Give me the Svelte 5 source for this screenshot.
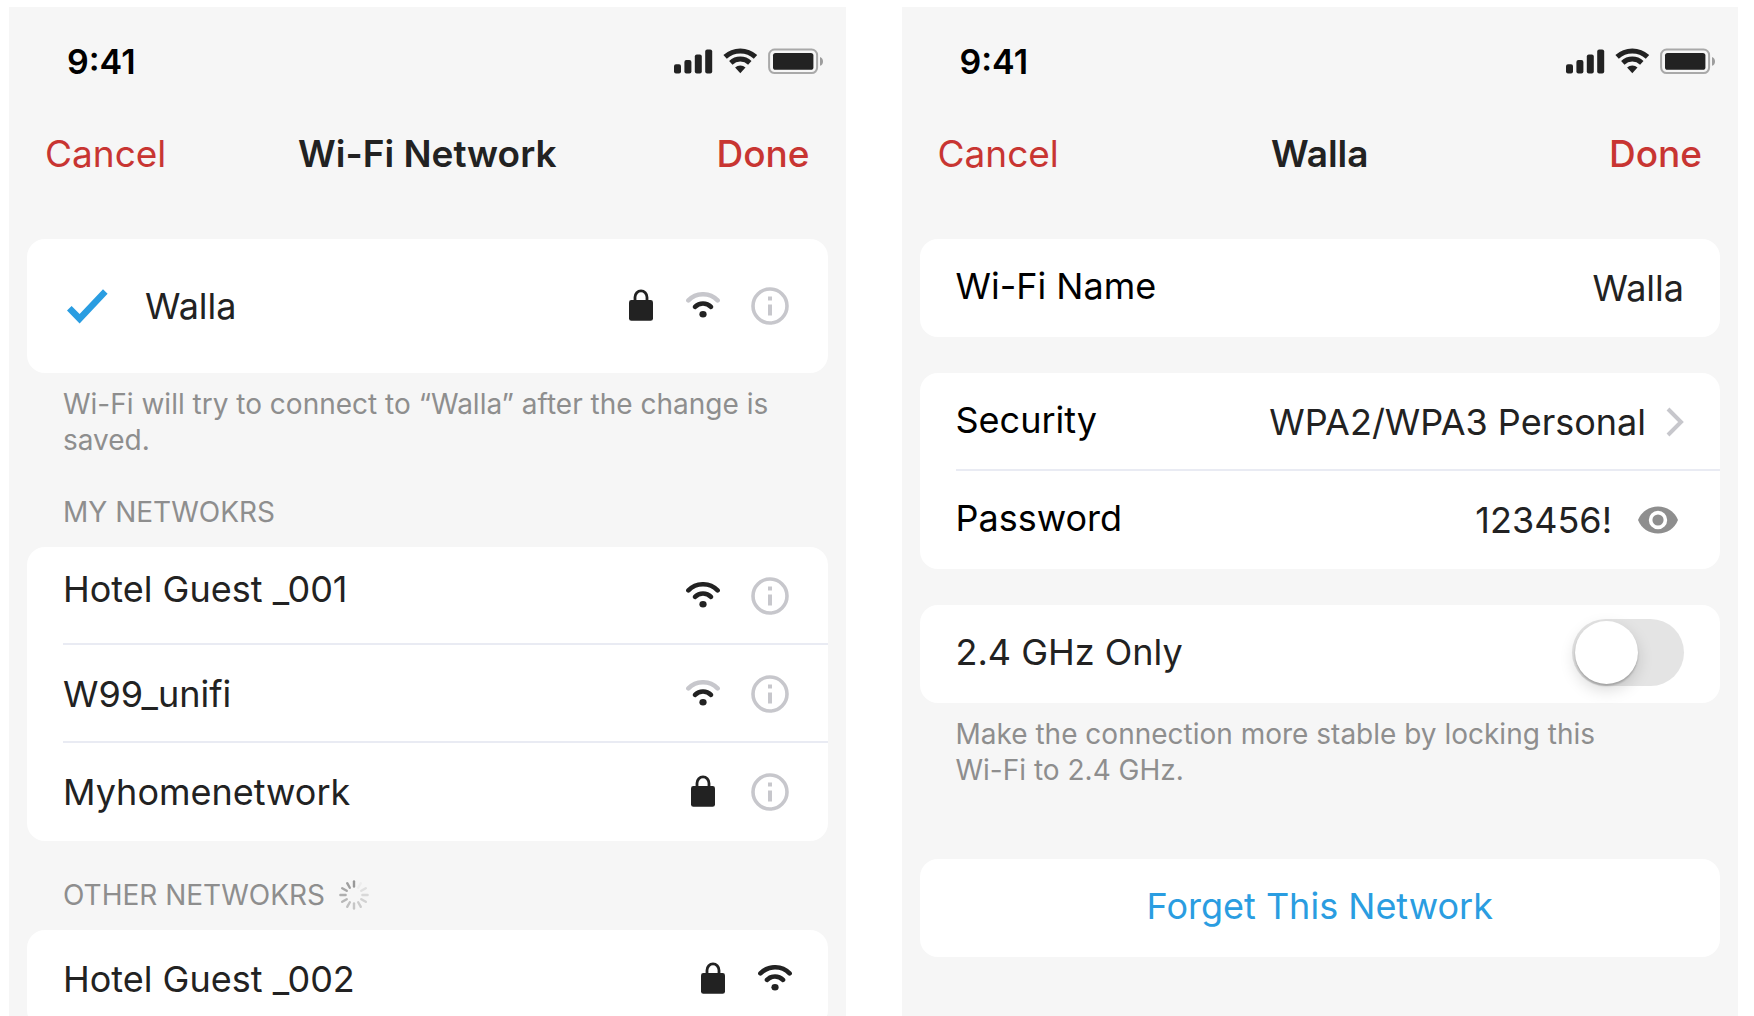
<!--
  Wi-Fi settings: the network picker on the left, the details of the joined network on the right.
-->
<script lang="ts">
  type Network = { name: string; locked?: boolean; signal?: 'full' | 'mid'; info?: boolean };

  const myNetworks: Network[] = [
    { name: 'Hotel Guest _001', signal: 'full', info: true },
    { name: 'W99_unifi', signal: 'mid', info: true },
    { name: 'Myhomenetwork', locked: true, info: true }
  ];
  const otherNetworks: Network[] = [{ name: 'Hotel Guest _002', locked: true, signal: 'full' }];
  const current: Network = { name: 'Walla', locked: true, signal: 'mid', info: true };

  // opacity of each spinner tick, clockwise from the top
  const ticks = [0.9, 0.08, 0.2, 0.28, 0.34, 0.4, 0.46, 0.52, 0.6, 0.68, 0.76, 0.84];

  let ssid = $state('Walla');
  let password = $state('123456!');
  let showPassword = $state(true);
  let only24 = $state(false);
</script>

{#snippet topBar(title: string)}
  <div class="status">
    <span class="time">9:41</span>
    <svg width="150" height="28" viewBox="0 0 150 28" aria-hidden="true">
      <g fill="#222">
        <rect x="0" y="16.2" width="7" height="9.4" rx="2" />
        <rect x="10.4" y="12" width="7" height="13.6" rx="2" />
        <rect x="20.8" y="6.4" width="7" height="19.2" rx="2" />
        <rect x="31.2" y="1.4" width="7" height="24.2" rx="2" />
      </g>
      <g fill="none" stroke="#222" stroke-width="5">
        <path d="M51.1 8.9A22.3 22.3 0 0 1 81.5 8.9" />
        <path d="M56.8 14.8A14 14 0 0 1 75.8 14.8" />
      </g>
      <path d="M66.3 25.2L61.1 19.6A7.6 7.6 0 0 1 71.5 19.6Z" fill="#222" />
      <rect x="95.1" y="1.5" width="48" height="23.6" rx="5.5" fill="none" stroke="#222" stroke-opacity="0.36" stroke-width="2" />
      <rect x="99" y="5" width="40.4" height="16.8" rx="2.6" fill="#222" />
      <path d="M146 9C148 9.8 149 11.4 149 13.4S148 17 146 17.8Z" fill="#222" fill-opacity="0.42" />
    </svg>
  </div>
  <header class="nav">
    <button type="button" class="cancel">Cancel</button>
    <h1>{title}</h1>
    <button type="button" class="done">Done</button>
  </header>
{/snippet}

{#snippet icons(net: Network)}
  <span class="icons">
    {#if net.locked}
      <svg width="34" height="34" viewBox="0 0 34 34" aria-hidden="true">
        <path d="M11 12V8.2A6 6.4 0 0 1 23 8.2V12" fill="none" stroke="#222" stroke-width="2.8" />
        <rect x="5" y="11" width="24" height="20.8" rx="2.4" fill="#222" />
      </svg>
    {/if}
    {#if net.signal}
      <svg width="34" height="28" viewBox="0 0 34 28" aria-hidden="true">
        <g fill="none" stroke="#222" stroke-width="4.6" stroke-linecap="round">
          <path d="M2.4 8.4A20.5 20.5 0 0 1 31.6 8.4" class:weak={net.signal === 'mid'} />
          <path d="M9 14.9A11.1 11.1 0 0 1 25 14.9" />
        </g>
        <ellipse cx="17" cy="22.3" rx="3.6" ry="3.2" fill="#222" />
      </svg>
    {/if}
    {#if net.info}
      <button type="button" class="info" aria-label="About {net.name}">
        <svg width="38" height="38" viewBox="0 0 38 38" aria-hidden="true">
          <circle cx="19" cy="19" r="17" fill="none" stroke="#c7c7cc" stroke-width="3.6" />
          <path d="M17 9.6h4v4h-4zM17 17.4h4v11h-4z" fill="#c7c7cc" />
        </svg>
      </button>
    {/if}
  </span>
{/snippet}

<main>
  <section class="screen">
    {@render topBar('Wi-Fi Network')}
    <div class="card">
      <div class="row tall">
        <span class="check">
          <svg width="41" height="35" viewBox="0 0 41 35" aria-hidden="true">
            <path d="M0 21.6L4.6 17L12.6 25L36 0.2L40.6 4.8L12.6 34.6Z" fill="#2a9de1" />
          </svg>
        </span>
        <span class="name">{current.name}</span>
        {@render icons(current)}
      </div>
    </div>
    <p class="note">Wi-Fi will try to connect to “Walla” after the change is saved.</p>

    <h2>MY NETWOKRS</h2>
    <ul class="card">
      {#each myNetworks as net, i (net.name)}
        <li class="row" class:top={i === 0}>
          <span class="name">{net.name}</span>
          {@render icons(net)}
        </li>
      {/each}
    </ul>

    <h2>
      OTHER NETWOKRS
      <svg width="30" height="30" viewBox="-15 -15 30 30" aria-hidden="true">
        {#each ticks as opacity, i}
          <path
            d="M0 -8.4V-13.6"
            transform="rotate({i * 30})"
            stroke="#8e8e8e"
            stroke-opacity={opacity}
            stroke-width="2.4"
            stroke-linecap="round"
          />
        {/each}
      </svg>
    </h2>
    <ul class="card">
      {#each otherNetworks as net (net.name)}
        <li class="row">
          <span class="name">{net.name}</span>
          {@render icons(net)}
        </li>
      {/each}
    </ul>
  </section>

  <section class="screen">
    {@render topBar('Walla')}
    <div class="card">
      <div class="row">
        <label class="field" for="ssid">Wi-Fi Name</label>
        <input id="ssid" class="value" type="text" bind:value={ssid} />
      </div>
    </div>

    <div class="card">
      <button type="button" class="row">
        <span class="field">Security</span>
        <span class="value">WPA2/WPA3 Personal</span>
        <svg class="chevron" width="18" height="30" viewBox="0 0 18 30" aria-hidden="true">
          <path d="M2 2L15 15L2 28" fill="none" stroke="#c7c7cc" stroke-width="4" />
        </svg>
      </button>
      <div class="row">
        <label class="field" for="password">Password</label>
        <input
          id="password"
          class="value"
          type={showPassword ? 'text' : 'password'}
          value={password}
          oninput={(e) => (password = e.currentTarget.value)}
        />
        <button
          type="button"
          class="eye"
          aria-label="Show password"
          aria-pressed={showPassword}
          onclick={() => (showPassword = !showPassword)}
        >
          <svg width="40" height="28" viewBox="0 0 40 28" aria-hidden="true">
            <path d="M0 14C3.4 5.6 11 0.5 20 0.5S36.6 5.6 40 14C36.6 22.4 29 27.5 20 27.5S3.4 22.4 0 14Z" fill="#8e8e8e" />
            <circle cx="20" cy="14" r="7.4" fill="#8e8e8e" stroke="#fff" stroke-width="3.6" />
          </svg>
        </button>
      </div>
    </div>

    <div class="card">
      <label class="row raised">
        <span class="name">2.4 GHz Only</span>
        <input class="toggle" type="checkbox" role="switch" bind:checked={only24} />
      </label>
    </div>
    <p class="note">Make the connection more stable by locking this<br />Wi-Fi to 2.4 GHz.</p>

    <div class="card forget">
      <button type="button" class="row raised">Forget This Network</button>
    </div>
  </section>
</main>

<style>
  :global(body) {
    background: #fff;
  }
  main {
    display: grid;
    grid-template-columns: repeat(2, minmax(0, 1fr));
    gap: 56px;
    height: 100vh;
    padding: 7px 16px 0 9px;
    box-sizing: border-box;
    font-family: Inter, 'Liberation Sans', sans-serif;
    font-size: 36px;
    line-height: 48px;
    color: #222;
  }
  .screen {
    background: #f6f6f6;
    padding: 0 18px;
    overflow-y: auto;
    scrollbar-width: none;
  }
  button,
  input {
    font: inherit;
    color: inherit;
    background: none;
    border: none;
    padding: 0;
    margin: 0;
  }
  button {
    cursor: pointer;
  }
  svg {
    display: block;
    flex: none;
  }

  .status {
    display: flex;
    align-items: center;
    justify-content: space-between;
    height: 110px;
    padding: 0 4px 0 40px;
  }
  .time {
    font-size: 34px;
    font-weight: 600;
    color: #000;
  }
  .nav {
    display: grid;
    grid-template-columns: 1fr auto 1fr;
    align-items: center;
    height: 74px;
    padding: 0 18px;
    margin-bottom: 48px;
    font-size: 37px;
  }
  h1 {
    margin: 0;
    font-size: 37px;
    font-weight: 600;
  }
  .cancel,
  .done {
    color: #c83532;
  }
  .cancel {
    justify-self: start;
  }
  .done {
    justify-self: end;
    font-weight: 500;
  }

  .card {
    list-style: none;
    margin: 0;
    padding: 0;
    background: #fff;
    border-radius: 18px;
  }
  .card + .card {
    margin-top: 36px;
  }
  .row {
    position: relative;
    display: flex;
    align-items: center;
    width: 100%;
    min-height: 98px;
    padding: 18px 36px;
    box-sizing: border-box;
    text-align: left;
  }
  .row:not(:last-child)::after {
    content: '';
    position: absolute;
    left: 36px;
    right: 0;
    bottom: 0;
    height: 2px;
    background: #e9ebf3;
  }
  .row.tall {
    min-height: 134px;
  }
  .row.top {
    align-items: flex-start;
  }
  .row.raised {
    padding-top: 12px;
    padding-bottom: 16px;
  }
  .name {
    flex: 1;
  }
  .check {
    display: flex;
    justify-content: center;
    width: 48px;
    margin-right: 34px;
  }
  .icons {
    display: flex;
    align-items: center;
    align-self: center;
    gap: 28px;
  }
  .weak {
    stroke: #c7c7cc;
  }
  .info {
    display: flex;
    justify-content: center;
    width: 44px;
  }

  .field {
    color: #000;
    padding-bottom: 4px;
  }
  .value {
    flex: 1;
    min-width: 0;
    text-align: right;
  }
  .value:focus {
    outline: none;
  }
  .chevron {
    margin-left: 20px;
  }
  .eye {
    display: flex;
    justify-content: center;
    width: 52px;
    margin-left: 20px;
  }

  .toggle {
    appearance: none;
    width: 112px;
    height: 67px;
    border-radius: 34px;
    background: #e4e4e4;
    cursor: pointer;
  }
  .toggle::before {
    content: '';
    display: block;
    width: 63px;
    height: 63px;
    margin: 2px 3px;
    border-radius: 50%;
    background: #fff;
    box-shadow:
      0 6px 16px rgba(0, 0, 0, 0.15),
      0 2px 2px rgba(0, 0, 0, 0.2);
  }
  .toggle:checked {
    background: #2a9de1;
  }
  .toggle:checked::before {
    margin-left: 46px;
  }

  h2 {
    display: flex;
    align-items: center;
    gap: 14px;
    margin: 36px 36px 17px;
    font-size: 28px;
    font-weight: 400;
    line-height: 36px;
    color: #8e8e8e;
  }
  .note {
    margin: 13px 36px 0;
    font-size: 28px;
    line-height: 36px;
    color: #8e8e8e;
  }
  .forget {
    margin-top: 71px;
  }
  .forget .row {
    justify-content: center;
    color: #2a9de1;
  }
</style>
